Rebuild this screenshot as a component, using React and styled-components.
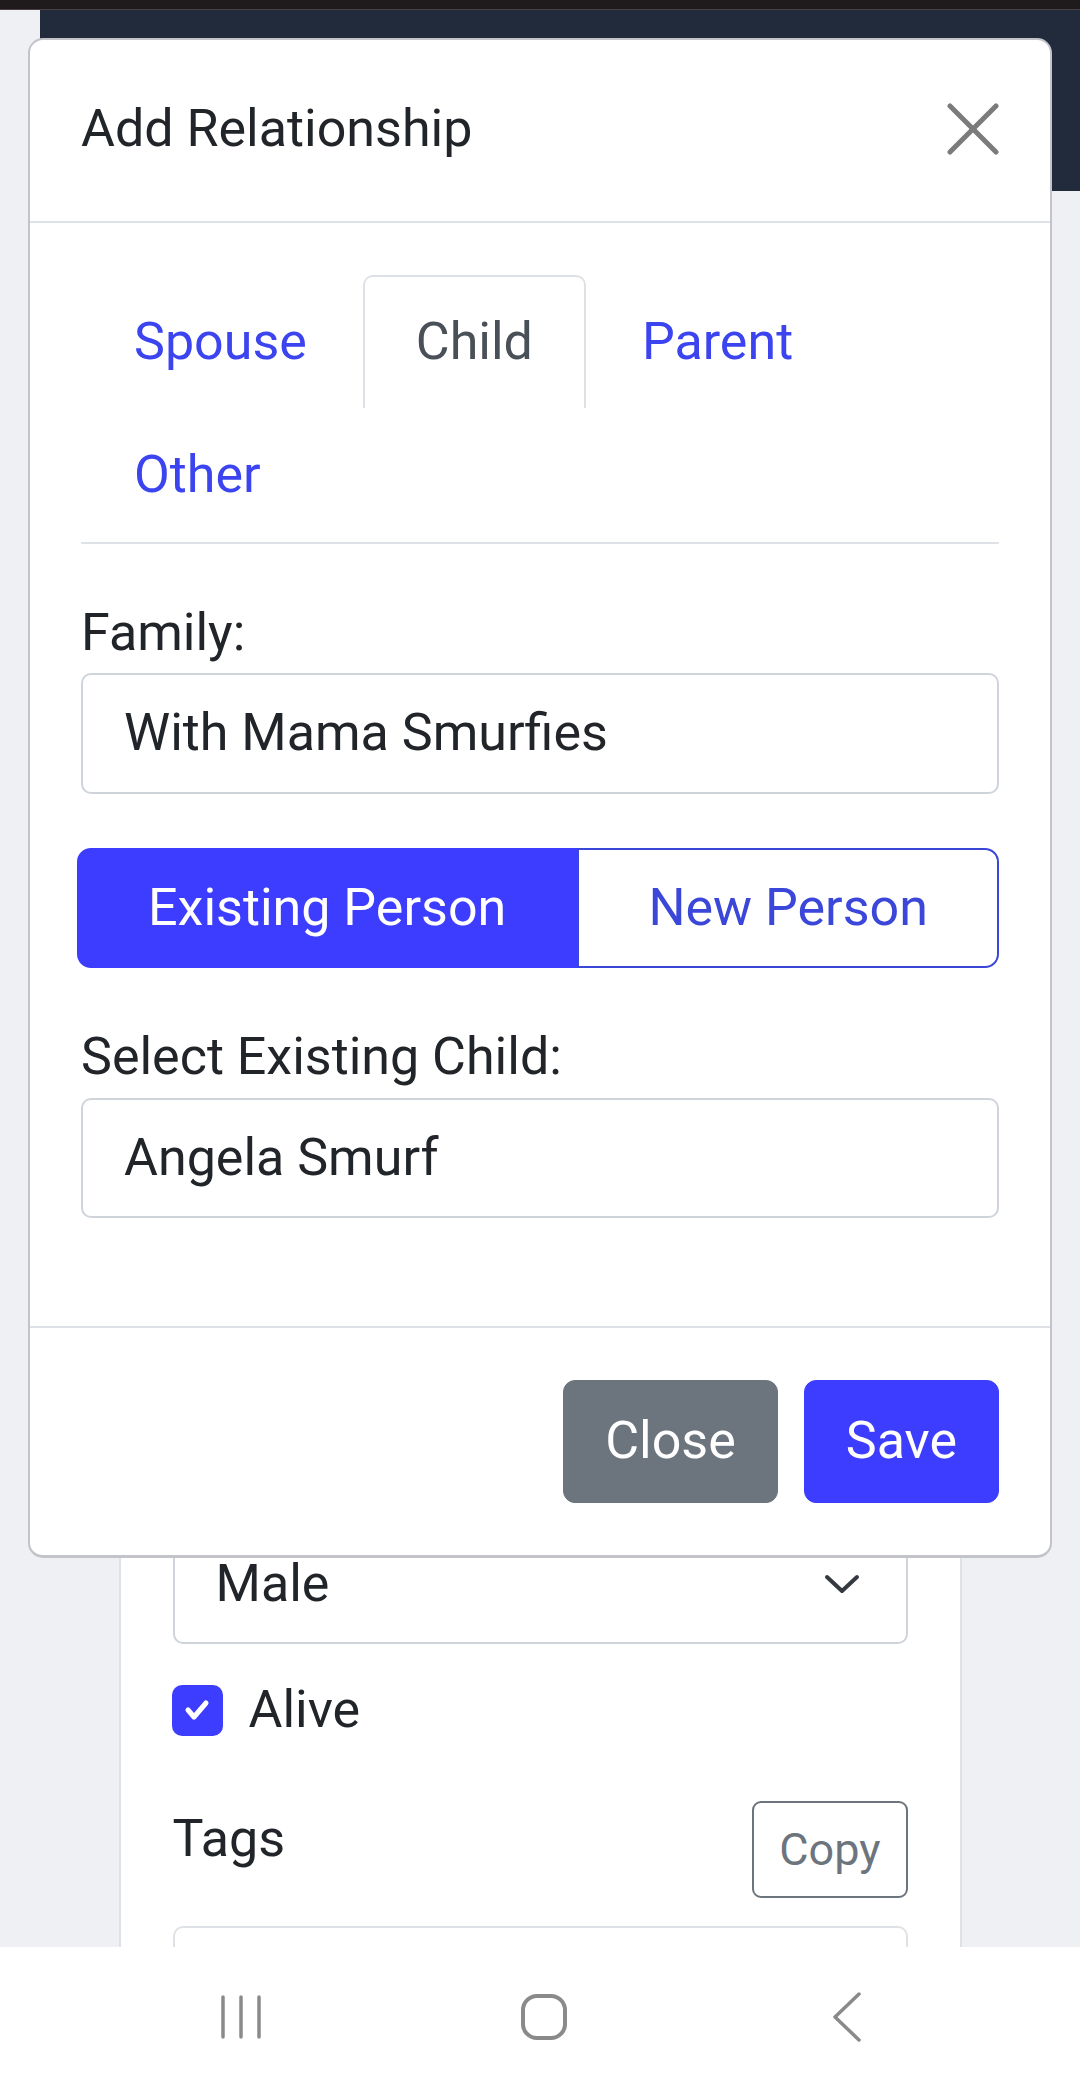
import styled, { createGlobalStyle } from "styled-components";

const BLUE = "#3d3dff";
const LINK = "#3b44ee";

const GlobalStyle = createGlobalStyle`
  html, body {
    margin: 0;
    padding: 0;
    background: #eef0f4;
  }
  * {
    box-sizing: border-box;
  }
  body {
    font-family: Roboto, "Noto Sans", "Liberation Sans", sans-serif;
    font-size: 52px;
    line-height: 76.5px;
    color: #212529;
  }
`;

// fields of the page form that sit behind the modal
const hiddenFields = ["first", "last", "nick", "birth"];

const App = () => {
  return (
    <>
      <GlobalStyle />
      <Screen>
        <StatusStrip />
        <Main>
          <TopBar />
          <Content>
            <Card>
              {hiddenFields.map((f) => (
                <Group key={f}>
                  <Label />
                  <Input />
                </Group>
              ))}
              <Label />
              <SelectBox>
                <span>Male</span>
                <svg width="36" height="20" viewBox="0 0 36 20">
                  <polyline
                    points="3,3 18,17 33,3"
                    fill="none"
                    stroke="#343a40"
                    strokeWidth="4"
                    strokeLinecap="round"
                    strokeLinejoin="round"
                  />
                </svg>
              </SelectBox>
              <CheckRow>
                <CheckBox>
                  <svg width="28" height="24" viewBox="0 0 28 24">
                    <polyline
                      points="5,12 11,19 23,5"
                      fill="none"
                      stroke="#fff"
                      strokeWidth="5"
                      strokeLinecap="round"
                      strokeLinejoin="round"
                    />
                  </svg>
                </CheckBox>
                <span>Alive</span>
              </CheckRow>
              <TagsRow>
                <span>Tags</span>
                <CopyButton>Copy</CopyButton>
              </TagsRow>
              <TagsInput />
            </Card>
          </Content>
        </Main>
        <NavBar>
          <NavItem>
            <svg width="44" height="46" viewBox="0 0 44 46">
              <g stroke="#8a8a8a" strokeWidth="3.5" strokeLinecap="round">
                <line x1="4" y1="3" x2="4" y2="43" />
                <line x1="22" y1="3" x2="22" y2="43" />
                <line x1="40" y1="3" x2="40" y2="43" />
              </g>
            </svg>
          </NavItem>
          <NavItem>
            <svg width="48" height="48" viewBox="0 0 48 48">
              <rect
                x="3"
                y="3"
                width="42"
                height="42"
                rx="14"
                fill="none"
                stroke="#8a8a8a"
                strokeWidth="4"
              />
            </svg>
          </NavItem>
          <NavItem>
            <svg width="30" height="50" viewBox="0 0 30 50">
              <polyline
                points="27,2 3,25 27,48"
                fill="none"
                stroke="#8a8a8a"
                strokeWidth="3.5"
                strokeLinecap="round"
                strokeLinejoin="round"
              />
            </svg>
          </NavItem>
        </NavBar>

        <Modal>
          <ModalHeader>
            <ModalTitle>Add Relationship</ModalTitle>
            <CloseIcon aria-label="Close">
              <svg width="52" height="52" viewBox="0 0 52 52">
                <g stroke="#7b7b7b" strokeWidth="5" strokeLinecap="round">
                  <line x1="3" y1="3" x2="49" y2="49" />
                  <line x1="49" y1="3" x2="3" y2="49" />
                </g>
              </svg>
            </CloseIcon>
          </ModalHeader>
          <ModalBody>
            <Tabs>
              <Tab>Spouse</Tab>
              <Tab active>Child</Tab>
              <Tab>Parent</Tab>
              <Tab>Other</Tab>
            </Tabs>
            <FieldLabel>Family:</FieldLabel>
            <Input>With Mama Smurfies</Input>
            <Toggle>
              <ToggleButton active>Existing Person</ToggleButton>
              <ToggleButton>New Person</ToggleButton>
            </Toggle>
            <FieldLabel>Select Existing Child:</FieldLabel>
            <Input>Angela Smurf</Input>
          </ModalBody>
          <ModalFooter>
            <Button variant="secondary">Close</Button>
            <Button>Save</Button>
          </ModalFooter>
        </Modal>
      </Screen>
    </>
  );
};
export default App;

const Screen = styled.div`
  position: relative;
  height: 2091px;
  display: flex;
  flex-direction: column;
  overflow: hidden;
  background: #eef0f4;
`;

const StatusStrip = styled.div`
  height: 10px;
  flex-shrink: 0;
  background: #1f1a1c;
  border-bottom: 1px solid #4a3f43;
`;

const Main = styled.div`
  flex: 1;
  overflow: hidden;
`;

const TopBar = styled.div`
  height: 181px;
  margin-left: 40px;
  background: #222b3b;
`;

const Content = styled.div`
  padding-top: 200px;
`;

const Card = styled.div`
  width: 843px;
  margin: 0 auto;
  padding: 52px;
  background: #fff;
  border: 2px solid #dee2e6;
  border-bottom: none;
`;

const Group = styled.div`
  margin-bottom: 51px;
`;

const Label = styled.div`
  min-height: 76.5px;
  margin-bottom: 2px;
`;

const Input = styled.div`
  height: 120.5px;
  padding: 20px 41px;
  background: #fff;
  border: 2px solid #ced4da;
  border-radius: 10px;
  color: #212529;
`;

const SelectBox = styled.div`
  height: 120.5px;
  padding: 20px 46px 20px 41px;
  display: flex;
  align-items: center;
  justify-content: space-between;
  border: 2px solid #ced4da;
  border-radius: 10px;
`;

const CheckRow = styled.div`
  margin-top: 28px;
  display: flex;
  align-items: center;
  gap: 26px;
  margin-left: -1px;
`;

const CheckBox = styled.div`
  width: 51px;
  height: 51px;
  border-radius: 10px;
  background: ${BLUE};
  display: flex;
  align-items: center;
  justify-content: center;
`;

const TagsRow = styled.div`
  margin-top: 52px;
  display: flex;
  justify-content: space-between;
  align-items: flex-start;
`;

const CopyButton = styled.div`
  padding: 13px 25px;
  font-size: 45px;
  line-height: 67.5px;
  color: #6c757d;
  border: 2px solid #6c757d;
  border-radius: 9px;
`;

const TagsInput = styled.div`
  margin-top: 28px;
  height: 120px;
  border: 2px solid #dee2e6;
  border-radius: 10px;
`;

const NavBar = styled.div`
  height: 144px;
  flex-shrink: 0;
  background: #fff;
  display: flex;
  align-items: center;
  justify-content: center;
  gap: 203px;
  padding-left: 8px;
  padding-bottom: 4px;
`;

const NavItem = styled.div`
  width: 100px;
  display: flex;
  justify-content: center;
`;

const Modal = styled.div`
  position: absolute;
  top: 38px;
  left: 28px;
  width: 1024px;
  background: #fff;
  border: 2px solid #c3c4c9;
  border-bottom-width: 3px;
  border-radius: 15px;
`;

const ModalHeader = styled.div`
  display: flex;
  align-items: center;
  justify-content: space-between;
  padding: 51px 51px 53px;
  border-bottom: 2px solid #dee2e6;
`;

const ModalTitle = styled.h5`
  margin: 0;
  font-size: 52px;
  font-weight: 400;
  line-height: 76.5px;
`;

const CloseIcon = styled.div`
  display: flex;
`;

const ModalBody = styled.div`
  padding: 52px 51px 108px;
`;

const Tabs = styled.div`
  display: flex;
  flex-wrap: wrap;
  border-bottom: 2px solid #dee2e6;
`;

const Tab = styled.div`
  margin-right: 3px;
  padding: 27px 51px 28px;
  border: 2px solid ${({ active }) => (active ? "#dee2e6" : "transparent")};
  border-bottom: none;
  border-radius: 10px 10px 0 0;
  color: ${({ active }) => (active ? "#495057" : LINK)};
  background: #fff;
`;

const FieldLabel = styled.div`
  margin-top: 51px;
  margin-bottom: 2px;
`;

const Toggle = styled.div`
  display: flex;
  margin: 54px 0 0 -4px;
`;

const ToggleButton = styled.div`
  flex: 1 1 auto;
  padding: 20px 24px;
  text-align: center;
  border: 2px solid ${({ active }) => (active ? BLUE : "#3a47d8")};
  background: ${({ active }) => (active ? BLUE : "#fff")};
  color: ${({ active }) => (active ? "#fff" : "#3a47d8")};

  &:first-child {
    border-radius: 14px 0 0 14px;
  }
  &:last-child {
    border-radius: 0 14px 14px 0;
  }
`;

const ModalFooter = styled.div`
  display: flex;
  justify-content: flex-end;
  gap: 26px;
  padding: 52px 51px;
  border-top: 2px solid #dee2e6;
`;

const Button = styled.div`
  padding: 22px 41px;
  border: 1px solid ${({ variant }) => (variant === "secondary" ? "#6c757d" : BLUE)};
  border-radius: 12px;
  background: ${({ variant }) => (variant === "secondary" ? "#6c757d" : BLUE)};
  color: #fff;
`;
